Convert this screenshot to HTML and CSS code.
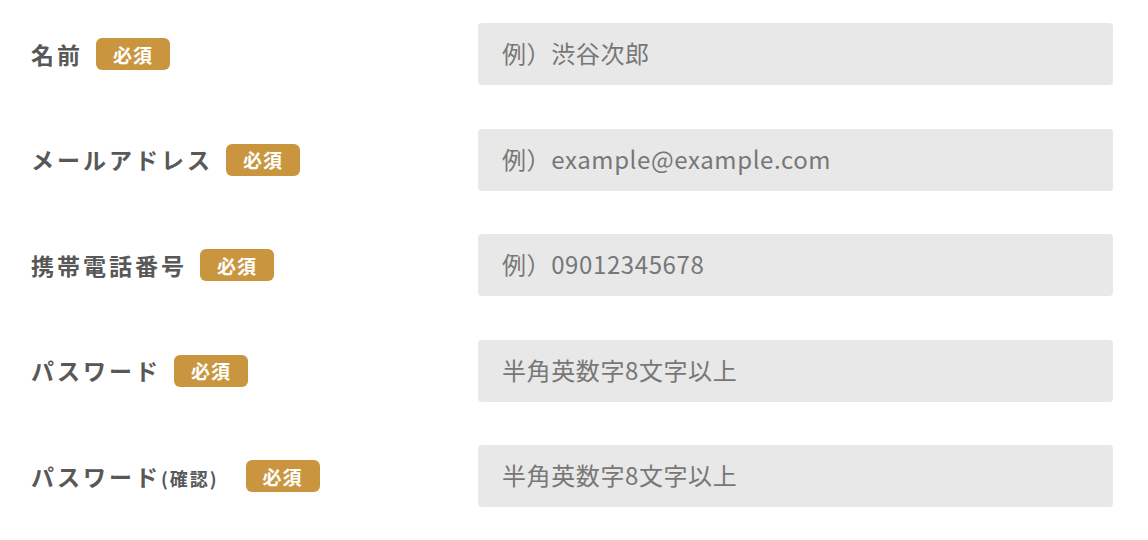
FILE: index.html
```html
<!DOCTYPE html>
<html lang="ja">
<head>
<meta charset="utf-8">
<link rel="stylesheet" href="styles.css">
</head>
<body>
<form class="form">
  <div class="row">
    <div class="label"><span class="label-text">名前</span><span class="badge">必須</span></div>
    <div class="field"><input class="input" type="text" placeholder="例）渋谷次郎"></div>
  </div>
  <div class="row">
    <div class="label"><span class="label-text">メールアドレス</span><span class="badge">必須</span></div>
    <div class="field"><input class="input" type="text" placeholder="例）example@example.com"></div>
  </div>
  <div class="row">
    <div class="label"><span class="label-text">携帯電話番号</span><span class="badge">必須</span></div>
    <div class="field"><input class="input" type="text" placeholder="例）09012345678"></div>
  </div>
  <div class="row">
    <div class="label"><span class="label-text">パスワード</span><span class="badge">必須</span></div>
    <div class="field"><input class="input" type="password" placeholder="半角英数字8文字以上"></div>
  </div>
  <div class="row">
    <div class="label"><span class="label-text">パスワード<small class="sub">(確認)</small></span><span class="badge badge-wide">必須</span></div>
    <div class="field"><input class="input" type="password" placeholder="半角英数字8文字以上"></div>
  </div>
</form>
</body>
</html>
```

FILE: styles.css
```css
html, body {
  margin: 0;
  padding: 0;
  background: #ffffff;
}
body {
  font-family: "Noto Sans CJK JP", "Noto Sans", sans-serif;
  width: 1148px;
  height: 540px;
  overflow: hidden;
}
.form {
  display: flex;
  flex-direction: column;
  gap: 43.5px;
  padding: 23px 0 0 31px;
}
.row {
  display: grid;
  grid-template-columns: 447px 635px;
  align-items: center;
}
.label {
  display: flex;
  align-items: center;
  gap: 13px;
}
.label-text {
  font-size: 23px;
  font-weight: 700;
  color: #585858;
  letter-spacing: 3px;
  line-height: 1;
}
.sub {
  font-size: 18px;
  letter-spacing: 2px;
}
.badge {
  display: inline-flex;
  align-items: center;
  justify-content: center;
  width: 74px;
  height: 32px;
  border-radius: 6px;
  background: #c9963f;
  color: #ffffff;
  font-size: 19px;
  font-weight: 700;
  letter-spacing: 1px;
  line-height: 1;
}
.badge-wide {
  margin-left: 14px;
}
.field {
  display: flex;
}
.input {
  box-sizing: border-box;
  width: 635px;
  height: 62px;
  border: none;
  border-radius: 4px;
  background: #e8e8e8;
  padding: 0 0 3px 24px;
  font-family: "Noto Sans CJK JP", "Noto Sans", sans-serif;
  font-size: 24px;
  letter-spacing: 0.6px;
  color: #666;
  outline: none;
}
.input::placeholder {
  color: #777777;
  opacity: 1;
}
```
